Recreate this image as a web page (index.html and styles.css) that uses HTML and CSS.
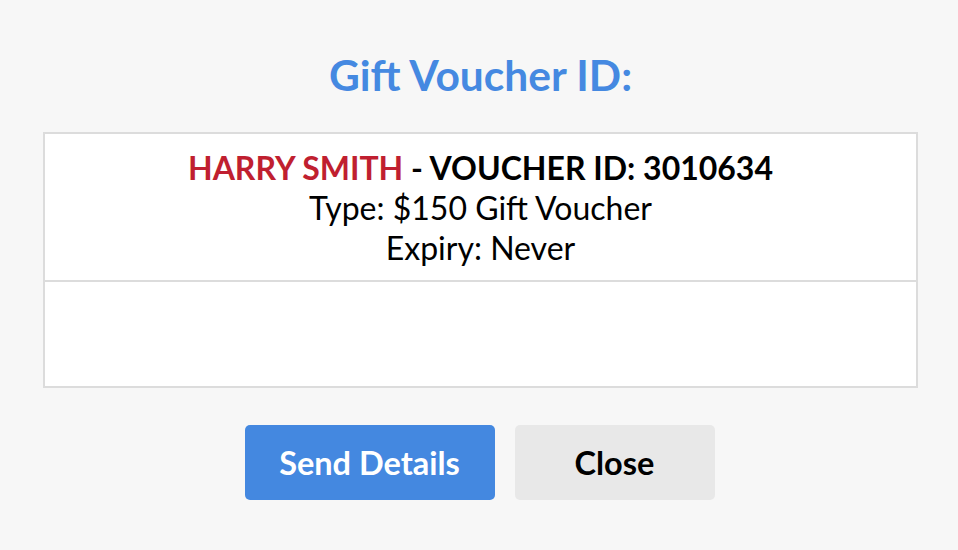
FILE: index.html
```html
<!DOCTYPE html>
<html>
<head>
<meta charset="utf-8">
<link rel="stylesheet" href="styles.css">
</head>
<body>
<div class="modal">
  <h1 class="title">Gift Voucher ID:</h1>
  <table class="voucher">
    <tr>
      <td class="info">
        <div class="line head"><span class="name">HARRY SMITH</span> - VOUCHER ID: 3010634</div>
        <div class="line">Type: $150 Gift Voucher</div>
        <div class="line">Expiry: Never</div>
      </td>
    </tr>
    <tr>
      <td class="empty"></td>
    </tr>
  </table>
  <div class="actions">
    <button class="btn primary">Send Details</button>
    <button class="btn secondary">Close</button>
  </div>
</div>
</body>
</html>
```
FILE: styles.css
```css
html, body {
  margin: 0;
  padding: 0;
  background: #f7f7f7;
  font-family: Lato, "Open Sans", sans-serif;
}
.modal {
  display: flex;
  flex-direction: column;
  align-items: center;
  padding: 0 40px 0 43px;
}
.title {
  margin: 50px 0 0;
  height: 50px;
  line-height: 50px;
  font-size: 42.5px;
  font-weight: 700;
  color: #4589e1;
}
.voucher {
  margin-top: 32px;
  width: 100%;
  border-collapse: collapse;
  background: #fff;
}
.voucher td {
  border: 2px solid #dcdcdc;
  padding: 0;
  text-align: center;
}
.info {
  height: 132px;
  vertical-align: top;
  padding-top: 14px !important;
}
.empty {
  height: 104px;
}
.line {
  font-size: 32px;
  line-height: 40px;
  color: #000;
}
.head {
  font-weight: 700;
}
.name {
  color: #c01f30;
}
.actions {
  display: flex;
  gap: 20px;
  margin-top: 37px;
  margin-right: 2px;
}
.btn {
  height: 75px;
  border: none;
  border-radius: 5px;
  font-family: Lato, sans-serif;
  font-size: 32.5px;
  font-weight: 700;
  cursor: pointer;
}
.primary {
  width: 250px;
  background: #4488e0;
  color: #fff;
}
.secondary {
  width: 200px;
  background: #e8e8e8;
  color: #000;
}
```
